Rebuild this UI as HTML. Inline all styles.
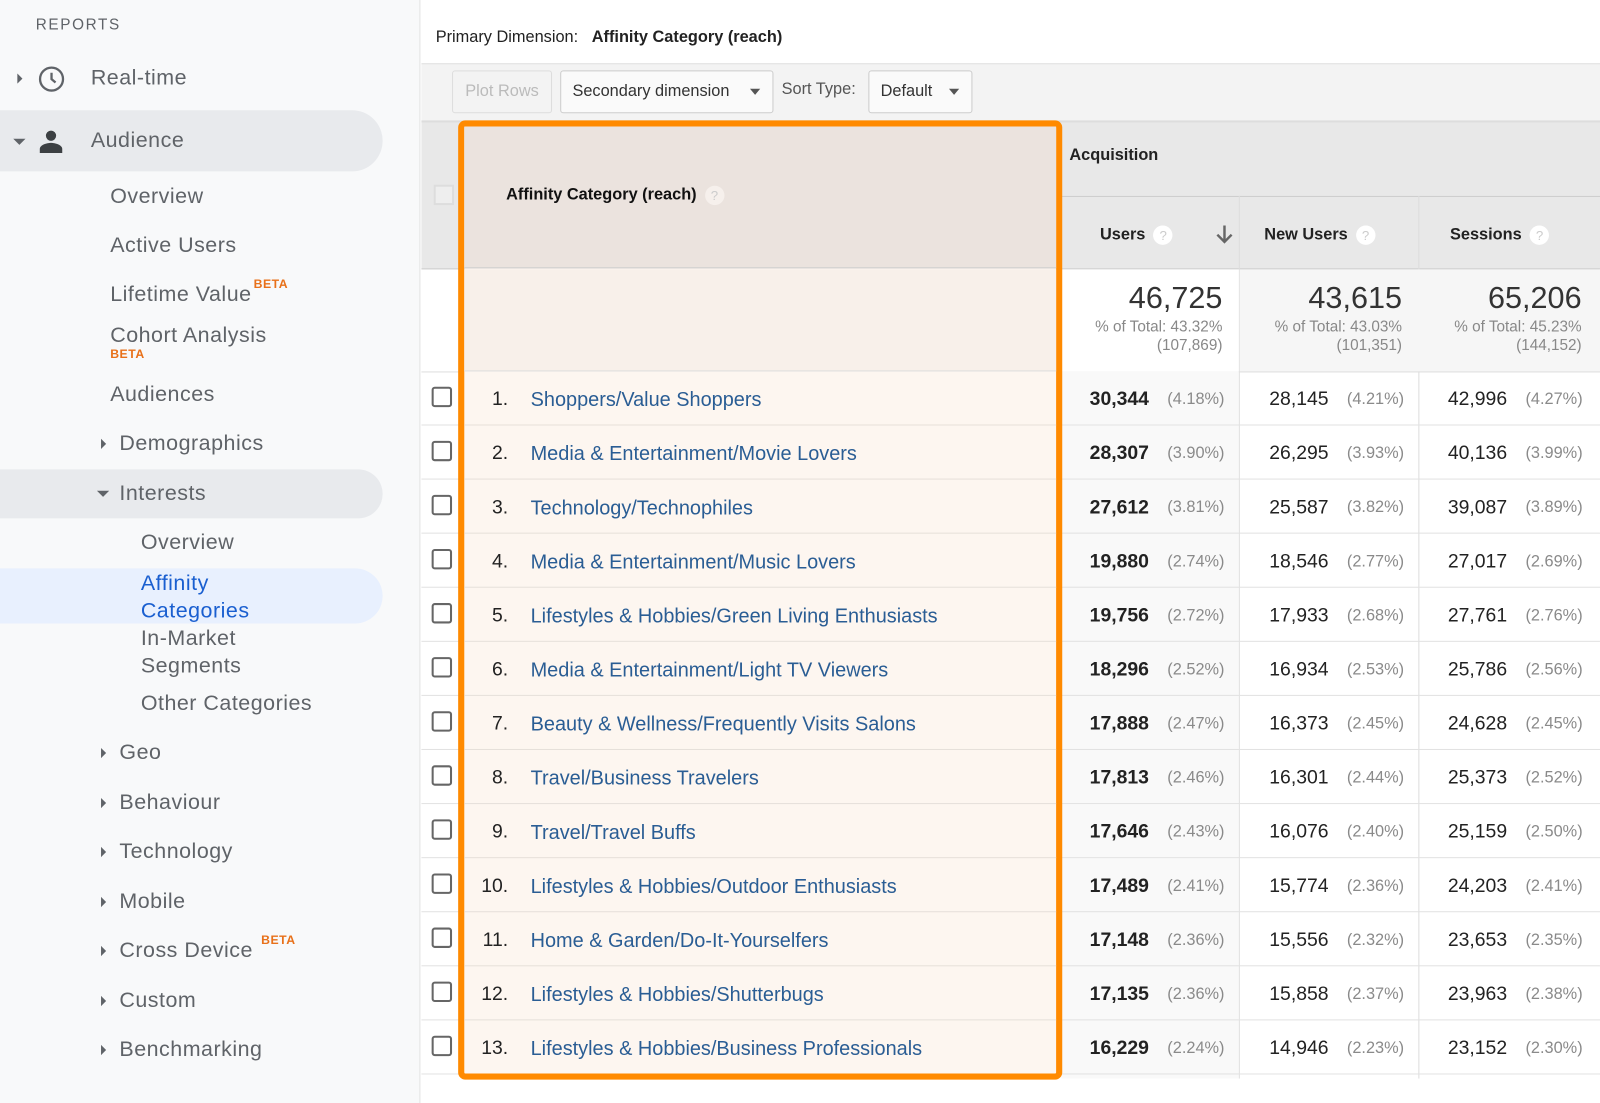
<!DOCTYPE html>
<html><head><meta charset="utf-8"><style>
*{margin:0;padding:0;box-sizing:border-box}
body{width:1600px;height:1081px;overflow:hidden;background:#fff;font-family:"Liberation Sans",Arial,sans-serif;position:relative}
#wrap{position:absolute;left:0;top:0;width:1568px;height:1060px;transform:scale(1.0204);transform-origin:0 0}
.a{position:absolute;white-space:nowrap}
#side{position:absolute;left:0;top:0;width:412px;height:1081px;background:#f8f9fa;border-right:1px solid #e3e3e3}
.band{position:absolute;left:0;width:375px;background:#e8eaed;border-radius:0 30px 30px 0}
.si{position:absolute;font-size:21px;letter-spacing:0.5px;color:#5f6368;white-space:nowrap}
.beta{color:#e8711a;font-size:12px;font-weight:bold;letter-spacing:.5px}
.tri-r{position:absolute;width:0;height:0;border-top:5px solid transparent;border-bottom:5px solid transparent;border-left:5px solid #5f6368}
.tri-d{position:absolute;width:0;height:0;border-left:6px solid transparent;border-right:6px solid transparent;border-top:6px solid #5f6368}
.cb{position:absolute;left:423px;width:20px;height:20px;border:2px solid #666;border-radius:3px;background:#fff}
.num{position:absolute;font-size:19px;color:#222;text-align:right}
.pct{position:absolute;font-size:16px;color:#8a8a8a;text-align:right}
.lnk{position:absolute;left:520px;font-size:19.5px;color:#2a5d94}
.q{display:inline-block;width:19px;height:19px;border-radius:50%;background:#fff;color:#ccc;font-size:13px;text-align:center;line-height:19px;vertical-align:middle;margin-left:8px;font-weight:normal}
</style></head><body><div id="wrap">
<div id="side">
<div class="a" style="left:35px;top:16px;font-size:15px;letter-spacing:1.6px;color:#5f6368">REPORTS</div>
<div class="tri-r" style="left:17px;top:72px"></div>
<svg class="a" style="left:37px;top:64px" width="27" height="27" viewBox="0 0 24 24"><circle cx="12" cy="12" r="10" fill="none" stroke="#5f6368" stroke-width="2"/><path d="M12 6.5V12l3.5 3" fill="none" stroke="#5f6368" stroke-width="2"/></svg>
<div class="si" style="left:89px;top:65px">Real-time</div>
<div class="band" style="top:108px;height:60px;width:375px"></div>
<div class="tri-d" style="left:13px;top:136px"></div>
<svg class="a" style="left:38px;top:126px" width="24" height="24" viewBox="0 0 24 24"><circle cx="12" cy="7" r="5" fill="#3c4043"/><path d="M1 24v-4c0-4 7-6 11-6s11 2 11 6v4z" fill="#3c4043"/></svg>
<div class="si" style="left:89px;top:126px">Audience</div>
<div class="si" style="left:108px;top:181px">Overview</div>
<div class="si" style="left:108px;top:229px">Active Users</div>
<div class="si" style="left:108px;top:277px">Lifetime Value<span class="beta" style="position:relative;top:-13px;left:2px">BETA</span></div>
<div class="si" style="left:108px;top:317px">Cohort Analysis</div>
<div class="a beta" style="left:108px;top:340px">BETA</div>
<div class="si" style="left:108px;top:375px">Audiences</div>
<div class="tri-r" style="left:99px;top:430px"></div>
<div class="si" style="left:117px;top:423px">Demographics</div>
<div class="band" style="top:460px;height:48px"></div>
<div class="tri-d" style="left:95px;top:481px"></div>
<div class="si" style="left:117px;top:472px">Interests</div>
<div class="si" style="left:138px;top:520px">Overview</div>
<div class="band" style="top:557px;height:54px;background:#e8f0fe"></div>
<div class="si" style="left:138px;top:558px;color:#1a5fd0;line-height:27px">Affinity<br>Categories</div>
<div class="si" style="left:138px;top:612px;line-height:27px">In-Market<br>Segments</div>
<div class="si" style="left:138px;top:678px">Other Categories</div>
<div class="tri-r" style="left:99px;top:733px"></div><div class="si" style="left:117px;top:726px">Geo</div>
<div class="tri-r" style="left:99px;top:782px"></div><div class="si" style="left:117px;top:775px">Behaviour</div>
<div class="tri-r" style="left:99px;top:830px"></div><div class="si" style="left:117px;top:823px">Technology</div>
<div class="tri-r" style="left:99px;top:879px"></div><div class="si" style="left:117px;top:872px">Mobile</div>
<div class="tri-r" style="left:99px;top:927px"></div><div class="si" style="left:117px;top:920px">Cross Device<span class="beta" style="position:relative;top:-13px;left:8px">BETA</span></div>
<div class="tri-r" style="left:99px;top:976px"></div><div class="si" style="left:117px;top:969px">Custom</div>
<div class="tri-r" style="left:99px;top:1024px"></div><div class="si" style="left:117px;top:1017px">Benchmarking</div>
</div>

<div class="a" style="left:413px;top:62px;width:1187px;height:56px;background:#f3f3f3;border-top:1px solid #e0e0e0"></div>
<div class="a" style="left:427px;top:28px;font-size:16px;color:#222">Primary Dimension:&nbsp;&nbsp; <b>Affinity Category (reach)</b></div>
<div class="a" style="left:443px;top:69px;width:98px;height:42px;border:1px solid #ddd;border-radius:3px;color:#bbb;font-size:16px;line-height:40px;text-align:center;background:#f3f3f3">Plot Rows</div>
<div class="a" style="left:549px;top:69px;width:209px;height:42px;border:1px solid #ccc;border-radius:3px;color:#333;font-size:16px;line-height:40px;padding-left:11px;background:#fafafa">Secondary dimension<span style="position:absolute;right:12px;top:17px;border-left:5px solid transparent;border-right:5px solid transparent;border-top:6px solid #555"></span></div>
<div class="a" style="left:766px;top:79px;font-size:16px;color:#555">Sort Type:</div>
<div class="a" style="left:851px;top:69px;width:102px;height:42px;border:1px solid #ccc;border-radius:3px;color:#333;font-size:16px;line-height:40px;padding-left:11px;background:#fafafa">Default<span style="position:absolute;right:12px;top:17px;border-left:5px solid transparent;border-right:5px solid transparent;border-top:6px solid #555"></span></div>

<div class="a" style="left:413px;top:118px;width:1155px;height:146px;background:#e8e8e8;border-top:2px solid #ddd;border-bottom:1px solid #ccc"></div>
<div class="a" style="left:1040px;top:192px;width:528px;height:1px;background:#ccc"></div>
<div class="a" style="left:1214px;top:192px;width:1px;height:865px;background:#ddd"></div>
<div class="a" style="left:1390px;top:192px;width:1px;height:865px;background:#ddd"></div>
<div class="a" style="left:1568px;top:118px;width:1px;height:940px;background:#ddd"></div>
<div class="a" style="left:425px;top:181px;width:20px;height:20px;border:2px solid #ddd;background:#eee"></div>
<div class="a" style="left:1048px;top:144px;font-size:16px;font-weight:bold;color:#222">Acquisition</div>
<div class="a" style="left:1078px;top:221px;font-size:16px;font-weight:bold;color:#222">Users<span class="q">?</span></div>
<svg class="a" style="left:1191px;top:220px" width="18" height="20" viewBox="0 0 18 20"><path d="M9 1v16M2 10l7 7 7-7" fill="none" stroke="#666" stroke-width="2.4"/></svg>
<div class="a" style="left:1239px;top:221px;font-size:16px;font-weight:bold;color:#222">New Users<span class="q">?</span></div>
<div class="a" style="left:1421px;top:221px;font-size:16px;font-weight:bold;color:#222">Sessions<span class="q">?</span></div>

<div class="a" style="left:1040px;top:264px;width:174px;height:100px;background:#fff"></div>
<div class="a" style="left:1215px;top:264px;width:353px;height:100px;background:#f6f6f6"></div>
<div class="a" style="left:413px;top:364px;width:1155px;height:1px;background:#ddd"></div>
<div class="a" style="left:1040px;top:276px;width:158px;text-align:right;font-size:30px;color:#333">46,725</div>
<div class="a" style="left:1040px;top:312px;width:158px;text-align:right;font-size:15px;color:#888;line-height:18px">% of Total: 43.32%<br>(107,869)</div>
<div class="a" style="left:1214px;top:276px;width:160px;text-align:right;font-size:30px;color:#333">43,615</div>
<div class="a" style="left:1214px;top:312px;width:160px;text-align:right;font-size:15px;color:#888;line-height:18px">% of Total: 43.03%<br>(101,351)</div>
<div class="a" style="left:1390px;top:276px;width:160px;text-align:right;font-size:30px;color:#333">65,206</div>
<div class="a" style="left:1390px;top:312px;width:160px;text-align:right;font-size:15px;color:#888;line-height:18px">% of Total: 45.23%<br>(144,152)</div>
<div class="a" style="left:1040px;top:364px;width:174px;height:693px;background:#f9f9f9"></div>

<div id="rows"></div>

<div class="a" style="left:449px;top:118px;width:592px;height:940px;border:6px solid #ff8a00;border-radius:7px;background:#fdf6f0;z-index:1"></div>
<div class="a" style="left:455px;top:124px;width:580px;height:139px;background:#ebe3de;border-bottom:1px solid #ccc;z-index:1"></div>
<div class="a" style="left:455px;top:264px;width:580px;height:100px;background:#f8f0ea;border-bottom:1px solid #ddd;z-index:1"></div>
<div class="a" style="left:496px;top:182px;font-size:16px;font-weight:bold;color:#111;z-index:2">Affinity Category (reach)<span class="q" style="background:#f6f0ec">?</span></div>
<div id="dims"></div>
</div>
<script>
var d=[["Shoppers/Value Shoppers","30,344","4.18","28,145","4.21","42,996","4.27"],
["Media &amp; Entertainment/Movie Lovers","28,307","3.90","26,295","3.93","40,136","3.99"],
["Technology/Technophiles","27,612","3.81","25,587","3.82","39,087","3.89"],
["Media &amp; Entertainment/Music Lovers","19,880","2.74","18,546","2.77","27,017","2.69"],
["Lifestyles &amp; Hobbies/Green Living Enthusiasts","19,756","2.72","17,933","2.68","27,761","2.76"],
["Media &amp; Entertainment/Light TV Viewers","18,296","2.52","16,934","2.53","25,786","2.56"],
["Beauty &amp; Wellness/Frequently Visits Salons","17,888","2.47","16,373","2.45","24,628","2.45"],
["Travel/Business Travelers","17,813","2.46","16,301","2.44","25,373","2.52"],
["Travel/Travel Buffs","17,646","2.43","16,076","2.40","25,159","2.50"],
["Lifestyles &amp; Hobbies/Outdoor Enthusiasts","17,489","2.41","15,774","2.36","24,203","2.41"],
["Home &amp; Garden/Do-It-Yourselfers","17,148","2.36","15,556","2.32","23,653","2.35"],
["Lifestyles &amp; Hobbies/Shutterbugs","17,135","2.36","15,858","2.37","23,963","2.38"],
["Lifestyles &amp; Hobbies/Business Professionals","16,229","2.24","14,946","2.23","23,152","2.30"]];
var h="",g="";
for(var i=0;i<d.length;i++){var t=364+i*53,r=d[i],ty=t+17;
h+='<div class="a" style="left:413px;top:'+(t+52)+'px;width:1155px;height:1px;background:#e2e2e2"></div>';
h+='<div class="cb" style="top:'+(t+15)+'px"></div>';
h+='<div class="num" style="left:1030px;width:96px;top:'+ty+'px;font-weight:bold">'+r[1]+'</div><div class="pct" style="left:1130px;width:70px;top:'+(ty+2)+'px">('+r[2]+'%)</div>';
h+='<div class="num" style="left:1200px;width:102px;top:'+ty+'px">'+r[3]+'</div><div class="pct" style="left:1306px;width:70px;top:'+(ty+2)+'px">('+r[4]+'%)</div>';
h+='<div class="num" style="left:1380px;width:97px;top:'+ty+'px">'+r[5]+'</div><div class="pct" style="left:1481px;width:70px;top:'+(ty+2)+'px">('+r[6]+'%)</div>';
if(i<12)g+='<div class="a" style="left:455px;top:'+(t+52)+'px;width:580px;height:1px;background:#e6e0da;z-index:2"></div>';
g+='<div class="num" style="left:460px;width:38px;top:'+ty+'px;z-index:2">'+(i+1)+'.</div><div class="lnk" style="top:'+ty+'px;z-index:2">'+r[0]+'</div>';}
document.getElementById("rows").innerHTML=h;document.getElementById("dims").innerHTML=g;
</script>
</body></html>
